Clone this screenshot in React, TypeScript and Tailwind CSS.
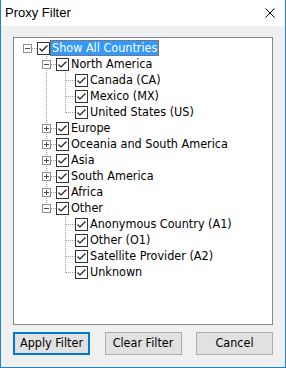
import React from 'react';

type Node = {
  label: string;
  selected?: boolean;
  expanded?: boolean;
  children?: Node[];
};

type Row = {
  node: Node;
  level: number;
  isLast: boolean;
  ancestorsLast: boolean[];
};

const TREE: Node[] = [
  {
    label: 'Show All Countries',
    selected: true,
    expanded: true,
    children: [
      {
        label: 'North America',
        expanded: true,
        children: [{ label: 'Canada (CA)' }, { label: 'Mexico (MX)' }, { label: 'United States (US)' }],
      },
      { label: 'Europe', children: [{ label: '-' }] },
      { label: 'Oceania and South America', children: [{ label: '-' }] },
      { label: 'Asia', children: [{ label: '-' }] },
      { label: 'South America', children: [{ label: '-' }] },
      { label: 'Africa', children: [{ label: '-' }] },
      {
        label: 'Other',
        expanded: true,
        children: [
          { label: 'Anonymous Country (A1)' },
          { label: 'Other (O1)' },
          { label: 'Satellite Provider (A2)' },
          { label: 'Unknown' },
        ],
      },
    ],
  },
];

const FONT = "font-['DejaVu_Sans_Condensed','Liberation_Sans',sans-serif]";

function flatten(nodes: Node[], level: number, ancestorsLast: boolean[], out: Row[]) {
  nodes.forEach((node, i) => {
    const isLast = i === nodes.length - 1;
    out.push({ node, level, isLast, ancestorsLast });
    if (node.expanded && node.children) flatten(node.children, level + 1, [...ancestorsLast, isLast], out);
  });
  return out;
}

// one 19px column of tree connector lines
const LineCell: React.FC<{ own: boolean; level: number; isLast: boolean; continues: boolean; node?: Node }> = ({
  own,
  level,
  isLast,
  continues,
  node,
}) => {
  const dot = { stroke: '#a0a0a0', strokeWidth: 1, strokeDasharray: '1 1', shapeRendering: 'crispEdges' as const };
  const hasChildren = !!node?.children;
  return (
    <svg width="19" height="16" className="shrink-0 block">
      {!own && continues && <line x1="9.5" y1="0" x2="9.5" y2="16" {...dot} />}
      {own && (
        <>
          {level > 0 && <line x1="9.5" y1="0" x2="9.5" y2={isLast ? 9 : 16} {...dot} />}
          <line x1="10" y1="8.5" x2="19" y2="8.5" {...dot} />
          {hasChildren && (
            <g shapeRendering="crispEdges">
              <rect x="5.5" y="4.5" width="8" height="8" fill="#fff" stroke="#919191" />
              <rect x="7" y="8" width="5" height="1" fill="#3c4a66" />
              {!node?.expanded && <rect x="9" y="6" width="1" height="5" fill="#3c4a66" />}
            </g>
          )}
        </>
      )}
    </svg>
  );
};

const CheckBox: React.FC = () => (
  <div className="w-[13px] h-[13px] shrink-0 border border-[#333333] bg-white">
    <svg width="11" height="11" className="block">
      <polyline points="1.5,5.5 4,8 9.5,2.5" fill="none" stroke="#1a1a1a" strokeWidth="1.2" />
    </svg>
  </div>
);

const TreeRow: React.FC<{ row: Row }> = ({ row }) => {
  const cols = [];
  for (let k = 0; k <= row.level; k++) {
    const own = k === row.level;
    // ancestor at level k continues if it is not the last among its siblings
    const continues = k > 0 && !own && !row.ancestorsLast[k];
    cols.push(
      <LineCell key={k} own={own} level={row.level} isLast={row.isLast} continues={continues} node={own ? row.node : undefined} />
    );
  }
  return (
    <div className="flex items-center h-[16px]">
      {cols}
      <CheckBox />
      <span
        className={
          row.node.selected
            ? 'h-[16px] leading-[14px] px-[1px] bg-[#3399ff] text-white border border-dotted border-[#b35a00] whitespace-nowrap'
            : 'h-[16px] leading-[16px] px-[2px] text-black whitespace-nowrap'
        }
      >
        {row.node.label}
      </span>
    </div>
  );
};

const DialogButton: React.FC<{ label: string; focused?: boolean }> = ({ label, focused }) => (
  <button
    className={
      focused
        ? 'w-[77px] h-[23px] bg-[#e1e1e1] border-2 border-[#0078d7] text-[12.5px] text-black'
        : 'w-[77px] h-[23px] bg-[#e1e1e1] border border-[#adadad] text-[12.5px] text-black'
    }
  >
    {label}
  </button>
);

export default function App() {
  const rows = flatten(TREE, 0, [], []);
  return (
    <div className={`w-[286px] h-[368px] flex flex-col border-x border-b border-[#1883d7] ${FONT}`}>
      <div className="h-[26px] shrink-0 bg-white flex items-center justify-between pl-[4px] pr-[10px]">
        <span className="text-[13px] text-black font-['Liberation_Sans',sans-serif]">Proxy Filter</span>
        <svg width="10" height="10" className="block">
          <path d="M0.5 0.5 L9.5 9.5 M9.5 0.5 L0.5 9.5" stroke="#000" strokeWidth="1" />
        </svg>
      </div>
      <div className="flex-1 bg-[#f0f0f0] pl-[12px] pt-[11px]">
        <div className="w-[260px] h-[288px] border border-[#828790] bg-white pt-[2px] pl-[4px] text-[12.5px]">
          {rows.map((row, i) => (
            <TreeRow key={i} row={row} />
          ))}
        </div>
        <div className="w-[260px] mt-[7px] flex justify-between">
          <DialogButton label="Apply Filter" focused />
          <DialogButton label="Clear Filter" />
          <DialogButton label="Cancel" />
        </div>
      </div>
    </div>
  );
}
